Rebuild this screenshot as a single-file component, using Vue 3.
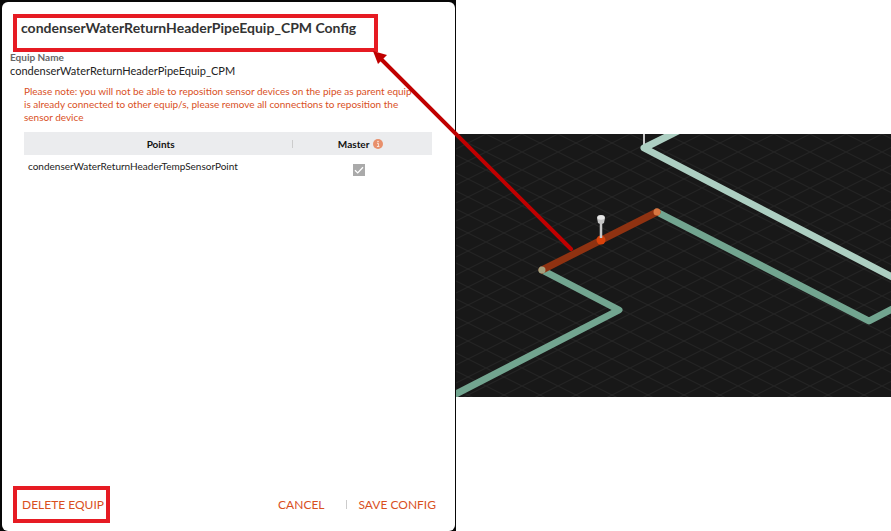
<script setup>
import { ref } from 'vue'

const equipName = ref('condenserWaterReturnHeaderPipeEquip_CPM')

const points = ref([
  { name: 'condenserWaterReturnHeaderTempSensorPoint', master: true },
])
</script>


<template>
  <main class="page">
    <section class="panel">
      <div class="dialog">
        <header class="marked title-mark">
          <h1>{{ equipName }} Config</h1>
        </header>

        <div class="name">
          <div class="name-label">Equip Name</div>
          <div class="name-value">{{ equipName }}</div>
        </div>

        <p class="note">
          Please note: you will not be able to reposition sensor devices on the pipe as parent equip
          is already connected to other equip/s, please remove all connections to reposition the
          sensor device
        </p>

        <table>
          <thead>
            <tr>
              <th class="col-points">Points</th>
              <th class="col-master">
                <span class="master-head">
                  Master
                  <svg class="info" viewBox="0 0 10 10" aria-hidden="true">
                    <circle cx="5" cy="5" r="5" fill="#e8906c" />
                    <path d="M4 4.3h1.4v3M3.9 7.5h2.5" stroke="#fbe6dc" fill="none" />
                    <circle cx="5" cy="2.5" r="0.8" fill="#fbe6dc" />
                  </svg>
                </span>
              </th>
            </tr>
          </thead>
          <tbody>
            <tr v-for="point in points" :key="point.name">
              <td class="point-name">
                <label :for="point.name">{{ point.name }}</label>
              </td>
              <td class="point-master">
                <span class="check">
                  <input :id="point.name" v-model="point.master" type="checkbox" disabled>
                  <svg viewBox="0 0 12 12" aria-hidden="true">
                    <path d="M2 6.2 4.7 8.9 10 3.2" />
                  </svg>
                </span>
              </td>
            </tr>
          </tbody>
        </table>

        <footer>
          <div class="marked delete-mark">
            <button type="button">DELETE EQUIP</button>
          </div>
          <div class="actions">
            <button type="button">CANCEL</button>
            <span class="divider"></span>
            <button type="button">SAVE CONFIG</button>
          </div>
        </footer>
      </div>
    </section>

    <section class="scene">
      <svg viewBox="0 0 435 263" role="img" aria-label="Pipe layout">
        <defs>
          <pattern id="floor" width="36" height="18" patternUnits="userSpaceOnUse" x="30" y="0">
            <path d="M-2 -1 38 19M-2 19 38 -1" stroke="#252525" fill="none" />
          </pattern>
        </defs>
        <rect width="435" height="263" fill="#181818" />
        <rect width="435" height="263" fill="url(#floor)" />
        <g fill="none" stroke-width="7" stroke-linecap="round" stroke-linejoin="round">
          <path d="M188 -2v16" stroke="#c9c9c9" stroke-width="2" stroke-linecap="butt" />
          <path d="M224 -4 188 14 440 145" stroke="#adcfc2" />
          <path d="M201 78 413 187 440 173" stroke="#72a590" />
          <path d="M86 136 163 176 -4 262" stroke="#72a590" />
          <path d="M86 136 201 78" stroke="#8f3211" />
        </g>
        <circle cx="201" cy="78" r="3.5" fill="#d97741" />
        <circle cx="86" cy="136" r="3.5" fill="#a5a17f" />
        <circle cx="145" cy="106" r="4.5" fill="#d9420b" />
        <path d="M145 87v17" stroke="#c8c8c8" stroke-width="2.5" />
        <path d="M141 84q0-3 4-3t4 3l-1 5q-3 2-6 0z" fill="#c4c4c4" />
        <ellipse cx="145" cy="83.5" rx="3.5" ry="2.2" fill="#e6e6e6" />
      </svg>
    </section>

    <svg class="arrow" viewBox="0 0 891 531" aria-hidden="true">
      <path d="M571 249 382 60" stroke="#c00000" stroke-width="4" stroke-linecap="round" />
      <path d="M373 51 387 55 378 64z" fill="#c00000" />
    </svg>
  </main>
</template>


<style>
body {
  margin: 0;
  background: #fff;
}
</style>

<style scoped>
.page {
  position: relative;
  display: grid;
  grid-template-columns: 456fr 435fr;
  min-height: 100vh;
  font-family: Lato, "Liberation Sans", sans-serif;
  color: #222;
}

.panel {
  display: flex;
  padding: 2px 1px 0 2px;
  background: #080808;
}

.dialog {
  flex: 1;
  min-width: 0;
  display: flex;
  flex-direction: column;
  background: #fff;
  border-radius: 6px;
}

.marked {
  box-sizing: border-box;
  border: 4px solid #e61b23;
}

.title-mark {
  align-self: flex-start;
  margin: 12px 0 0 11px;
  padding: 0 18px 10px 4px;
}

h1 {
  margin: 0;
  font-size: 14px;
  line-height: 20px;
  font-weight: 700;
  color: #333;
}

.name {
  padding-left: 8px;
}

.name-label {
  font-size: 10px;
  line-height: 10px;
  font-weight: 700;
  color: #666;
}

.name-value {
  margin-top: 3px;
  font-size: 11px;
  line-height: 12px;
}

.note {
  margin: 8px 35px 0 22px;
  font-size: 10px;
  line-height: 13px;
  color: #d9501e;
}

table {
  margin: 8px 23px 0 22px;
  border-collapse: collapse;
  table-layout: fixed;
}

th {
  height: 23px;
  padding: 0;
  background: #ebecee;
  font-size: 10px;
  line-height: 12px;
  font-weight: 700;
  color: #111;
}

.col-points {
  width: 66%;
  padding-left: 4px;
  background: linear-gradient(#ccc, #ccc) right center / 1px 8px no-repeat #ebecee;
}

.col-master {
  padding-right: 4px;
}

.master-head {
  display: inline-flex;
  align-items: center;
  gap: 4px;
}

.info {
  width: 10px;
  height: 10px;
}

td {
  padding: 4px;
  vertical-align: top;
}

.point-name {
  font-size: 10px;
  line-height: 14px;
}

.point-master {
  padding: 9px 12px 0 4px;
}

.check {
  display: grid;
  justify-content: center;
}

.check > * {
  grid-area: 1 / 1;
  width: 12px;
  height: 12px;
  margin: 0;
}

.check input {
  appearance: none;
  background: #aaa;
}

.check path {
  fill: none;
  stroke: #fff;
  stroke-width: 1.3;
}

footer {
  display: flex;
  justify-content: space-between;
  align-items: center;
  margin: auto 19px 8px 11px;
}

.delete-mark {
  padding: 6px 2px 6px 5px;
}

.actions {
  display: flex;
  align-items: center;
}

button {
  display: block;
  padding: 0;
  border: 0;
  background: none;
  font-family: inherit;
  font-size: 12px;
  line-height: 17px;
  color: #d9501e;
  cursor: pointer;
}

.divider {
  width: 1px;
  height: 9px;
  margin: 0 12px 0 21px;
  background: #ccc;
}

.scene {
  padding-top: 134px;
}

.scene svg {
  display: block;
  width: 100%;
}

.arrow {
  position: absolute;
  top: 0;
  left: 0;
  width: 100%;
  pointer-events: none;
}
</style>
